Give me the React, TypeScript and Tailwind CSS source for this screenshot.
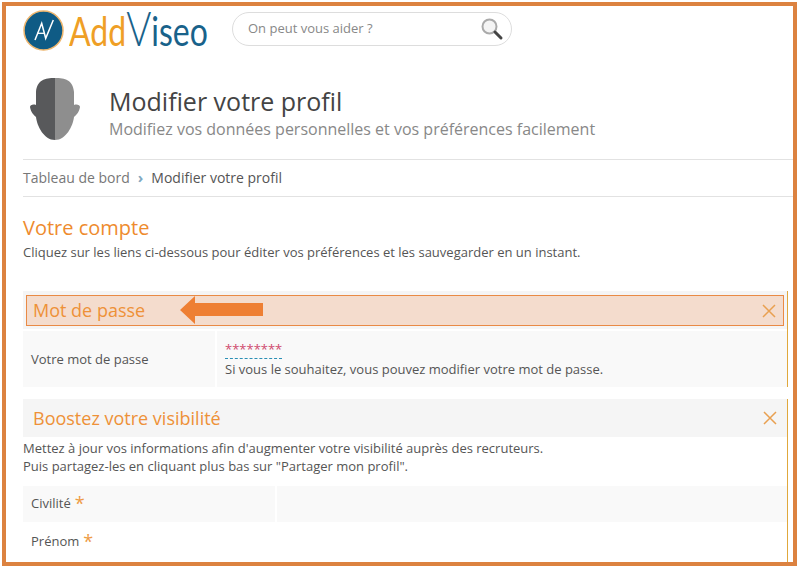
const FONT = { fontFamily: '"Open Sans", "Liberation Sans", sans-serif' };

function CloseIcon() {
  return (
    <svg width="16" height="16" viewBox="0 0 16 16" fill="none" stroke="#e9a050" strokeWidth="1.5">
      <path d="M2 2l12 12M14 2L2 14" />
    </svg>
  );
}

function Star() {
  return <span className="text-[18px] leading-none text-[#ee9b45] relative top-[-1px] ml-[4px]">*</span>;
}

export default function App() {
  return (
    <div className="w-[799px] h-[567px] bg-white p-[2px] overflow-hidden text-[#555]" style={FONT}>
      <div className="h-[564px] border-[4px] border-[#dc8240] pl-[17px] overflow-hidden">
        {/* Header */}
        <div className="flex items-start h-[70px]">
          <div className="flex items-start w-[209px] h-[48px] pt-[4px]">
            <svg width="41" height="41" viewBox="0 0 41 41" className="shrink-0">
              <circle cx="20.5" cy="20.5" r="19.5" fill="#0f5b85" stroke="#eeb56d" strokeWidth="1.5" />
              <path d="M12 30L18.7 13.3l4 15L30.3 10" fill="none" stroke="#fff" strokeWidth="1.5" />
              <path d="M14 23.3h7.3" stroke="#fff" strokeWidth="1.3" />
            </svg>
            <span className="ml-[5px] mt-[-11px] flex items-baseline whitespace-nowrap origin-left scale-x-[0.8]" style={{ fontFamily: '"Lato", sans-serif' }}>
              <span className="text-[40px] leading-[48px] text-[#ef9f26]">Add</span>
              <span className="text-[48px] leading-[58px] font-light text-[#19628a]">V</span>
              <span className="text-[40px] leading-[48px] text-[#19628a]">iseo</span>
            </span>
          </div>
          <div className="mt-[6px] w-[280px] h-[34px] rounded-[17px] border border-[#ddd] flex items-center justify-between pl-[15px] pr-[7px]">
            <span className="text-[13px] text-[#888]">On peut vous aider ?</span>
            <svg width="24" height="24" viewBox="0 0 24 24" fill="none">
              <circle cx="9.5" cy="9.5" r="7" stroke="#aaa" strokeWidth="2" fill="#f4f4f4" />
              <path d="M15 15l6 6" stroke="#444" strokeWidth="3" strokeLinecap="round" />
            </svg>
          </div>
        </div>

        {/* Profile title */}
        <div className="flex items-start h-[83px]">
          <svg width="50" height="62" viewBox="0 0 50 62" className="ml-[7px] mt-[2px] shrink-0">
            <path d="M25 0C15 0 7 2 6 14v13c-3-1-6 0-6 2 1 6 4 8 6 10 1 9 8 23 19 23z" fill="#58595b" />
            <path d="M25 0c10 0 18 2 19 14v13c3-1 6 0 6 2-1 6-4 8-6 10-1 9-8 23-19 23z" fill="#8e8e8e" />
          </svg>
          <div className="ml-[29px] mt-[10px]">
            <div className="text-[25px] leading-[31px] text-[#444]">Modifier votre profil</div>
            <div className="text-[16px] leading-[24px] text-[#888]">Modifiez vos données personnelles et vos préférences facilement</div>
          </div>
        </div>

        {/* Breadcrumb */}
        <div className="h-[38px] pb-[2px] border-y border-[#e2e2e2] flex items-center text-[14px]">
          <span className="text-[#777]">Tableau de bord</span>
          <span className="mx-[8px] text-[#7fa8c0] text-[15px] font-bold">›</span>
          <span className="text-[#555]">Modifier votre profil</span>
        </div>

        <div className="mt-[17px] text-[20px] leading-[27px] text-[#ee8b2e]">Votre compte</div>
        <div className="mt-[2px] text-[13px] leading-[18px] text-[#555]">
          Cliquez sur les liens ci-dessous pour éditer vos préférences et les sauvegarder en un instant.
        </div>

        {/* Password section */}
        <div className="mt-[30px] w-[765px] border-r border-[#e0a83c]">
          <div className="relative h-[38px] bg-[#f5f5f5] px-[3px] py-[4px]">
            <div className="h-[31px] border border-[#e98a45] bg-[#f4dccd] flex items-center justify-between pl-[6px] pr-[6px]">
              <span className="text-[18px] text-[#ee9138]">Mot de passe</span>
              <CloseIcon />
            </div>
            <svg width="84" height="28" viewBox="0 0 84 28" className="absolute left-[157px] top-[5px]">
              <path d="M0 14L15 0v7h68v13H15v8z" fill="#ee7f33" />
            </svg>
          </div>
          <div className="mt-[2px] flex gap-[2px] h-[56px]">
            <div className="w-[192px] bg-[#f9f9f9] flex items-center pl-[8px] pt-[2px] text-[13px]">Votre mot de passe</div>
            <div className="flex-1 bg-[#f9f9f9] pl-[8px] pt-[9px]">
              <div className="w-fit border-b border-dashed border-[#2a8fb5] text-[13px] leading-[18px] text-[#cf4a6e]">********</div>
              <div className="mt-[1px] text-[13px] leading-[18px]">Si vous le souhaitez, vous pouvez modifier votre mot de passe.</div>
            </div>
          </div>
        </div>

        {/* Visibility section */}
        <div className="mt-[12px] w-[765px] border-r border-[#e0a83c]">
          <div className="h-[38px] bg-[#f5f5f5] flex items-center justify-between pl-[10px] pr-[9px]">
            <span className="text-[18px] text-[#ee9138]">Boostez votre visibilité</span>
            <CloseIcon />
          </div>
          <div className="pt-[2px] text-[13px] leading-[18px]">
            <div>Mettez à jour vos informations afin d'augmenter votre visibilité auprès des recruteurs.</div>
            <div>Puis partagez-les en cliquant plus bas sur "Partager mon profil".</div>
          </div>
          <div className="mt-[11px] flex gap-[2px] h-[36px]">
            <div className="w-[252px] bg-[#f9f9f9] flex items-center pl-[8px] text-[13px]">Civilité<Star /></div>
            <div className="flex-1 bg-[#f9f9f9]" />
          </div>
          <div className="flex h-[40px] items-center pl-[8px] text-[13px]">Prénom<Star /></div>
        </div>
      </div>
    </div>
  );
}
